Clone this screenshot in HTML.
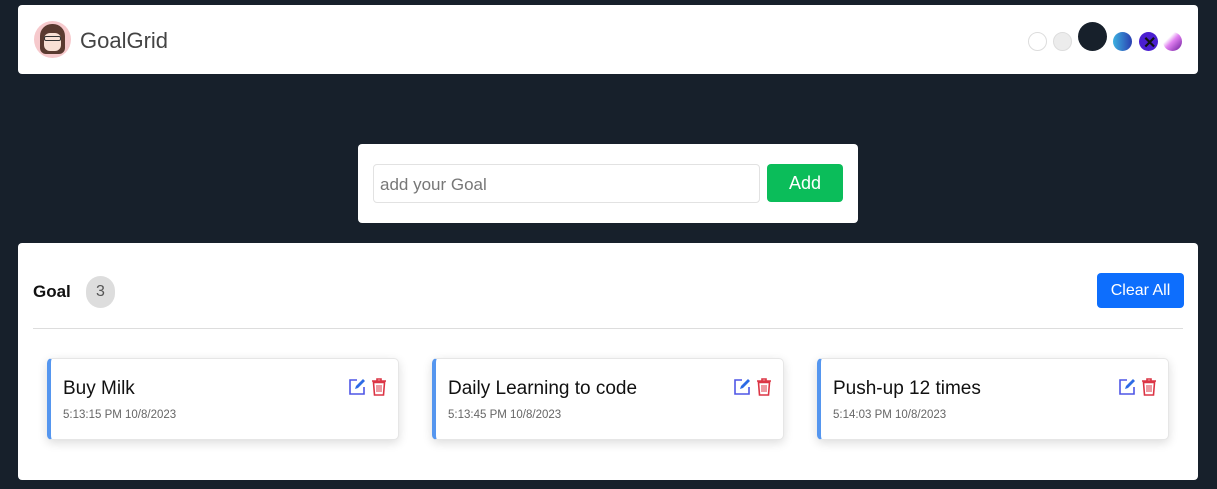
<!DOCTYPE html>
<html><head><style>
body{margin:0;width:1217px;height:489px;background:#17202b;font-family:"Liberation Sans",sans-serif;position:relative;overflow:hidden}
.abs{position:absolute}
.hdr{left:18px;top:5px;width:1180px;height:69px;background:#fff;border-radius:4px}
.logo{left:16px;top:16px;width:37px;height:37px;border-radius:50%;background:#f6c9cc;overflow:hidden}
.title{left:62px;top:23px;font-size:22px;color:#444}
.dot{position:absolute;border-radius:50%}
.inp{left:358px;top:144px;width:500px;height:79px;background:#fff;border-radius:4px}
.field{left:15px;top:20px;width:387px;height:39px;border:1px solid #e2e2e2;border-radius:4px;box-sizing:border-box;color:#777;font-size:17px;padding:10px 6px}
.add{left:409px;top:20px;width:76px;height:38px;background:#0bbd5a;border-radius:4px;color:#fff;font-size:18px;text-align:center;line-height:39px}
.main{left:18px;top:243px;width:1180px;height:237px;background:#fff;border-radius:4px}
.card{top:115px;width:352px;height:82px;background:#fff;border-radius:5px;box-shadow:0 3px 10px rgba(0,0,0,.14);border:1px solid #e6e6e6;box-sizing:border-box;border-left:4px solid #5596ef}
.card .t{position:absolute;left:12px;top:19px;font-size:19px;color:#111}
.card .d{position:absolute;left:12px;top:50px;font-size:11.5px;color:#666}
.card svg{position:absolute;top:19px}
</style></head><body>
<div class="abs hdr">
 <div class="abs logo"><div class="abs" style="left:6px;top:3px;width:25px;height:30px;background:#5a3a30;border-radius:12px 12px 6px 6px"></div><div class="abs" style="left:10px;top:12px;width:17px;height:18px;background:#f8e0d4;border-radius:6px"></div><div class="abs" style="left:10px;top:15px;width:17px;height:5px;border:1px solid #333;border-radius:2px;box-sizing:border-box"></div></div>
 <div class="abs title">GoalGrid</div>
 <div class="dot" style="left:1010px;top:27px;width:19px;height:19px;border:1px solid #ddd;box-sizing:border-box;background:#fff"></div>
 <div class="dot" style="left:1035px;top:27px;width:19px;height:19px;border:1px solid #ddd;box-sizing:border-box;background:#ececec"></div>
 <div class="dot" style="left:1060px;top:17px;width:29px;height:29px;background:#17202b"></div>
 <div class="dot" style="left:1095px;top:27px;width:19px;height:19px;background:linear-gradient(90deg,#3bb0e0,#2a3fb0)"></div>
 <div class="dot" style="left:1121px;top:27px;width:19px;height:19px;background:#4b1fd0"><span style="position:absolute;left:4px;top:1px;color:#111;font-size:16px;font-weight:bold">✕</span></div>
 <div class="dot" style="left:1145px;top:27px;width:19px;height:19px;background:linear-gradient(135deg,#fff 30%,#e080f0 50%,#6a1a9a)"></div>
</div>
<div class="abs inp"><div class="abs field">add your Goal</div><div class="abs add">Add</div></div>
<div class="abs main">
 <div class="abs" style="left:15px;top:39px;font-size:17px;font-weight:bold;color:#111">Goal</div>
 <div class="abs" style="left:68px;top:33px;width:29px;height:32px;border-radius:15px;background:#ddd;color:#555;font-size:16px;text-align:center;line-height:32px">3</div>
 <div class="abs" style="left:1079px;top:30px;width:87px;height:35px;background:#0d6efd;border-radius:4px;color:#fff;font-size:16px;text-align:center;line-height:35px">Clear All</div>
 <div class="abs" style="left:15px;top:85px;width:1150px;height:1px;background:#ddd"></div>
 <div class="abs card" style="left:29px"><div class="t">Buy Milk</div><div class="d">5:13:15 PM 10/8/2023</div>
  <svg style="left:297px" width="18" height="18" viewBox="0 0 18 18"><path d="M9 2H2v14h14V9" fill="none" stroke="#4f56e6" stroke-width="1.6"/><path d="M7 11l1-3 7-7 2 2-7 7z" fill="#2d6be6"/></svg>
  <svg style="left:320px" width="16" height="18" viewBox="0 0 16 18"><path d="M1 3h14M6 3V1h4v2M2.5 4.5l1 12.5h9l1-12.5z" fill="none" stroke="#dc3545" stroke-width="1.6"/><path d="M6 7v7M8 7v7M10 7v7" stroke="#dc3545"/></svg></div>
 <div class="abs card" style="left:414px"><div class="t">Daily Learning to code</div><div class="d">5:13:45 PM 10/8/2023</div>
  <svg style="left:297px" width="18" height="18" viewBox="0 0 18 18"><path d="M9 2H2v14h14V9" fill="none" stroke="#4f56e6" stroke-width="1.6"/><path d="M7 11l1-3 7-7 2 2-7 7z" fill="#2d6be6"/></svg>
  <svg style="left:320px" width="16" height="18" viewBox="0 0 16 18"><path d="M1 3h14M6 3V1h4v2M2.5 4.5l1 12.5h9l1-12.5z" fill="none" stroke="#dc3545" stroke-width="1.6"/><path d="M6 7v7M8 7v7M10 7v7" stroke="#dc3545"/></svg></div>
 <div class="abs card" style="left:799px"><div class="t">Push-up 12 times</div><div class="d">5:14:03 PM 10/8/2023</div>
  <svg style="left:297px" width="18" height="18" viewBox="0 0 18 18"><path d="M9 2H2v14h14V9" fill="none" stroke="#4f56e6" stroke-width="1.6"/><path d="M7 11l1-3 7-7 2 2-7 7z" fill="#2d6be6"/></svg>
  <svg style="left:320px" width="16" height="18" viewBox="0 0 16 18"><path d="M1 3h14M6 3V1h4v2M2.5 4.5l1 12.5h9l1-12.5z" fill="none" stroke="#dc3545" stroke-width="1.6"/><path d="M6 7v7M8 7v7M10 7v7" stroke="#dc3545"/></svg></div>
</div>
</body></html>
